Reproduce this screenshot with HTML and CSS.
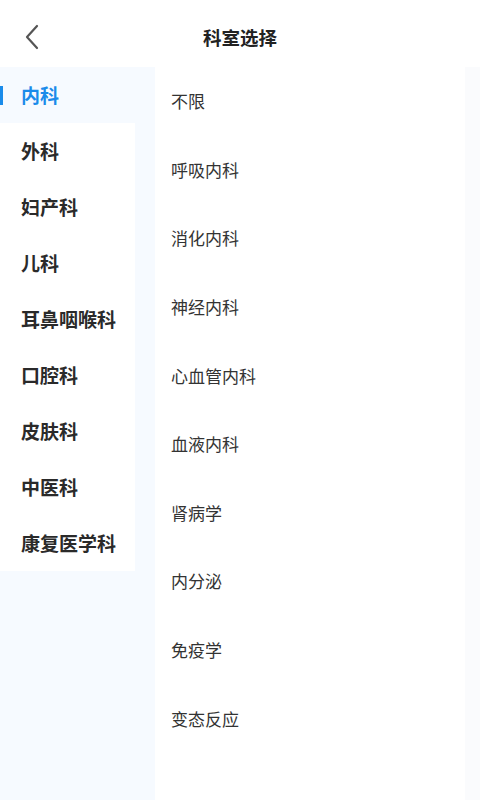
FILE: index.html
```html
<!DOCTYPE html>
<html lang="zh">
<head>
<meta charset="utf-8">
<link rel="stylesheet" href="styles.css">
</head>
<body>
<div class="page">
  <header class="header">
    <div class="back">
      <svg width="20" height="30" viewBox="0 0 20 30"><polyline points="15,4 5,15 15,26" fill="none" stroke="#555" stroke-width="2.2" stroke-linecap="round" stroke-linejoin="round"/></svg>
    </div>
    <div class="title">科室选择</div>
  </header>
  <div class="body">
    <aside class="side">
      <div class="side-item active">内科</div>
      <div class="side-item">外科</div>
      <div class="side-item">妇产科</div>
      <div class="side-item">儿科</div>
      <div class="side-item">耳鼻咽喉科</div>
      <div class="side-item">口腔科</div>
      <div class="side-item">皮肤科</div>
      <div class="side-item">中医科</div>
      <div class="side-item">康复医学科</div>
    </aside>
    <main class="list">
      <div class="list-item">不限</div>
      <div class="list-item">呼吸内科</div>
      <div class="list-item">消化内科</div>
      <div class="list-item">神经内科</div>
      <div class="list-item">心血管内科</div>
      <div class="list-item">血液内科</div>
      <div class="list-item">肾病学</div>
      <div class="list-item">内分泌</div>
      <div class="list-item">免疫学</div>
      <div class="list-item">变态反应</div>
    </main>
    <div class="edge"></div>
  </div>
</div>
</body>
</html>
```
FILE: styles.css
```css
* { box-sizing: border-box; }
html, body { margin: 0; padding: 0; }
body {
  width: 480px;
  height: 800px;
  overflow: hidden;
  background: #fff;
  font-family: "Noto Sans CJK SC", "Noto Sans", sans-serif;
}
.page { display: flex; flex-direction: column; height: 800px; }
.header {
  height: 67px;
  flex: none;
  position: relative;
  display: flex;
  align-items: center;
  justify-content: center;
}
.back {
  position: absolute;
  left: 22px;
  top: 22px;
  width: 20px;
  height: 30px;
}
.back svg { display: block; }
.title {
  font-size: 18.5px;
  font-weight: bold;
  color: #222;
  margin-top: 6px;
}
.body { flex: 1; display: flex; }
.side {
  width: 155px;
  flex: none;
  background: #f6faff;
}
.side-item {
  width: 135px;
  height: 56px;
  display: flex;
  align-items: center;
  padding-left: 21px;
  padding-bottom: 2px;
  font-size: 19px;
  font-weight: bold;
  color: #2a2a2a;
  background: #fff;
  position: relative;
}
.side-item.active {
  background: #f6faff;
  color: #1a8bea;
}
.side-item.active::before {
  content: "";
  position: absolute;
  left: 0;
  top: 19px;
  width: 3px;
  height: 19px;
  background: #1a8bea;
}
.list { flex: 1; background: #fff; }
.list-item {
  height: 68.6px;
  display: flex;
  align-items: center;
  padding-left: 16px;
  padding-bottom: 1px;
  font-size: 17px;
  color: #333;
}
.edge { width: 15px; flex: none; background: #fafbfd; }
```
